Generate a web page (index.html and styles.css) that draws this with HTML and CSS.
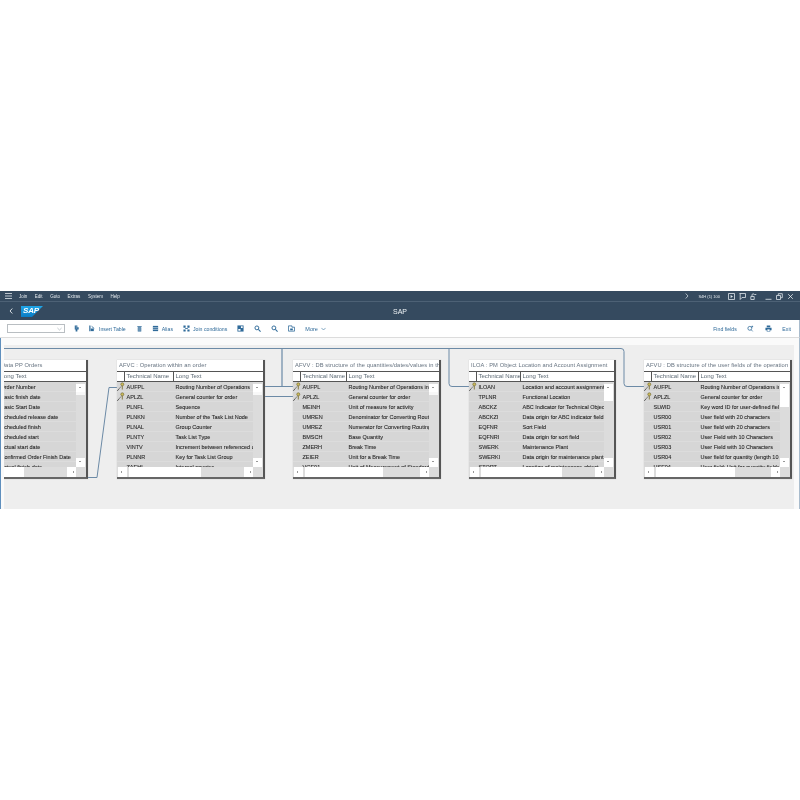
FILE: index.html
```html
<!DOCTYPE html>
<html lang="en">
<head>
<meta charset="utf-8">
<title>SAP</title>
<link rel="stylesheet" href="styles.css">
</head>
<body>
<svg class="defs" width="0" height="0" aria-hidden="true">
  <symbol id="key" viewBox="0 0 9 10">
    <path d="M5 4.600 1 9.200" fill="none" stroke="#3a3a3a" stroke-width=".9" stroke-dasharray="1.100 .5"/>
    <circle cx="6.300" cy="2.300" r="1.500" fill="#cdbb5a" stroke="#6b6330" stroke-width=".6"/>
    <path d="M6.300 3.800v3.700" stroke="#7d7235" stroke-width=".9"/>
  </symbol>
</svg>
<div class="app">
  <div class="menubar">
    <svg class="burger" viewBox="0 0 7 6"><path d="M0 .5h7M0 3h7M0 5.500h7" stroke="#dfe6ec" stroke-width=".8"/></svg>
    <nav class="menu">
      <span>Join</span><span>Edit</span><span>Goto</span><span>Extras</span><span>System</span><span>Help</span>
    </nav>
    <div class="status">
      <svg class="chev" viewBox="0 0 4 6"><path d="M.7.5 3 3 .7 5.500" fill="none" stroke="#dfe6ec" stroke-width=".7"/></svg>
      <span class="sys">S4H (1) 100</span>
      <svg class="win" viewBox="0 0 7 7"><path d="M.5.5h6v6h-6z" fill="none" stroke="#dfe6ec" stroke-width=".8"/><path d="M2.600 2 5 3.500 2.600 5z" fill="#dfe6ec"/></svg>
      <svg class="win" viewBox="0 0 7 7"><path d="M.5.5h6v4H3L1.200 6.500V.5" fill="none" stroke="#dfe6ec" stroke-width=".8"/></svg>
      <svg class="win" viewBox="0 0 7 7"><path d="M.8 3.500h3.400v3H.8zM2 3.500V2a1.200 1.200 0 0 1 2.400 0M4.800 1.500h1.500" fill="none" stroke="#dfe6ec" stroke-width=".8"/></svg>
      <svg class="win gap" viewBox="0 0 7 7"><path d="M.5 6.300h6" stroke="#dfe6ec" stroke-width=".8"/></svg>
      <svg class="win" viewBox="0 0 7 7"><path d="M.5 2.500h4v4h-4zM2.300 2.300V.7h4v4H4.800" fill="none" stroke="#dfe6ec" stroke-width=".8"/></svg>
      <svg class="win" viewBox="0 0 7 7"><path d="M1.200 1.200l4.600 4.600M5.800 1.200 1.200 5.800" stroke="#e8edf1" stroke-width=".8"/></svg>
    </div>
  </div>
  <header class="titlebar">
    <svg class="back" viewBox="0 0 4 6"><path d="M3.300.5 1 3l2.300 2.500" fill="none" stroke="#e8edf1" stroke-width=".9"/></svg>
    <svg class="logo" viewBox="0 0 22 11"><defs><linearGradient id="sap" x1="0" y1="0" x2="0" y2="1"><stop offset="0" stop-color="#1fa6e8"/><stop offset="1" stop-color="#0a7cc4"/></linearGradient></defs><path d="M0 0h22L11 11H0z" fill="url(#sap)"/></svg>
    <span class="logotext">SAP</span>
    <h1 class="apptitle">SAP</h1>
  </header>
  <div class="toolbar">
    <div class="combo"><svg viewBox="0 0 6 4"><path d="M.5.8 3 3.200 5.500.8" fill="none" stroke="#9aa3aa" stroke-width=".7"/></svg></div>
    <svg class="tool first" viewBox="0 0 8 8"><path d="M2 .5h3v2h1.500v2.500H5v2.500H3V5H2z" fill="#2f6a99"/><path d="M3 2h2M3 3.500h2" stroke="#fff" stroke-width=".4"/></svg>
    <button class="tbtn wide1"><svg viewBox="0 0 8 8"><path d="M1 .5v6.500" stroke="#2f6a99" stroke-width="1.400"/><path d="M2 4h3.500v3H2z" fill="#2f6a99"/><path d="M3 1.500 6 4" stroke="#2f6a99"/></svg>Insert Table</button>
    <svg class="tool" viewBox="0 0 8 8"><path d="M1.500 1h5v1h-5zM2 2.500h4v5H2z" fill="#2f6a99"/><path d="M3.300 3.300v3.500M4.700 3.300v3.500" stroke="#fff" stroke-width=".5"/></svg>
    <button class="tbtn wide2"><svg viewBox="0 0 8 8"><path d="M1 1h6v6H1z" fill="#2f6a99"/><path d="M1 3h6M1 5h6" stroke="#fff" stroke-width=".6"/></svg>Alias</button>
    <button class="tbtn wide3"><svg viewBox="0 0 8 8"><path d="M.5.500h2.500v2.500H.5zM5 .5h2.500V3H5zM.5 5H3v2.500H.5zM5 5h2.500v2.500H5z" fill="#2f6a99"/><path d="M2.500 4h3" stroke="#2f6a99"/></svg>Join conditions</button>
    <svg class="tool" viewBox="0 0 8 8"><path d="M.5.5h7v7h-7z" fill="#2f6a99"/><path d="M1.500 4.500h2.500v2h-2.500z M4.500 1.500h2v2h-2z" fill="#fff"/></svg>
    <svg class="tool sp" viewBox="0 0 8 8"><circle cx="3.300" cy="3.300" r="2.200" fill="none" stroke="#2f6a99" stroke-width="1.100"/><path d="M5 5l2.500 2.500" stroke="#2f6a99" stroke-width="1.200"/></svg>
    <svg class="tool sp" viewBox="0 0 8 8"><circle cx="3.300" cy="3.300" r="2.200" fill="none" stroke="#2f6a99" stroke-width="1.100"/><path d="M5 5l2.500 2.500" stroke="#2f6a99" stroke-width="1.200"/></svg>
    <svg class="tool sp" viewBox="0 0 8 8"><path d="M.5 1h4v1.500h3V7h-7z" fill="none" stroke="#2f6a99" stroke-width=".9"/><path d="M2.500 4h3v2h-3z" fill="#2f6a99"/></svg>
    <button class="tbtn more">More<svg class="caret" viewBox="0 0 6 4"><path d="M.5.700 3 3.200 5.500.7" fill="none" stroke="#2f6a99" stroke-width=".7"/></svg></button>
    <div class="rtools">
      <button class="tbtn">Find fields</button>
      <svg class="tool" viewBox="0 0 8 8"><circle cx="3.200" cy="3.800" r="2.200" fill="none" stroke="#2f6a99" stroke-width=".9"/><path d="M4.800 5.400 6.500 7.300M6 .8v2M5 1.800h2" stroke="#2f6a99" stroke-width=".8"/></svg>
      <svg class="tool" viewBox="0 0 8 8"><path d="M2 .5h4v2H2zM.5 3h7v3h-1.500v1.500H2V6H.5z" fill="#2f6a99"/><path d="M2.700 5h2.600v2H2.700z" fill="#fff"/></svg>
      <button class="tbtn">Exit</button>
    </div>
  </div>
  <main class="canvas">
    <div class="board">
      <svg class="links" viewBox="0 0 800 171" aria-hidden="true">
        <g fill="none" stroke="#6c8aa6" stroke-width="1">
          <path d="M88 139.500h9l12-90h8"/>
          <path d="M265 48.500h28"/>
          <path d="M265 58.500h28"/>
          <path d="M4 10.500h617q3 0 3 3v32q0 3 3 3h17"/>
          <path d="M282 11v37" stroke-width="1.600" stroke="#8ba2b8"/>
          <path d="M449 11v34.500q0 3 3 3h17"/>
        </g>
      </svg>

      <section class="card c1">
        <h2 class="cardtitle">AFKO : Order Header Data PP Orders</h2>
        <div class="thead"><span></span><span>Technical Name</span><span>Long Text</span></div>
        <div class="rows">
          <div class="row"><i></i><span>AUFNR</span><span>Order Number</span></div>
          <div class="row"><i></i><span>GLTRP</span><span>Basic finish date</span></div>
          <div class="row"><i></i><span>GSTRP</span><span>Basic Start Date</span></div>
          <div class="row"><i></i><span>FTRMS</span><span>Scheduled release date</span></div>
          <div class="row"><i></i><span>GLTRS</span><span>Scheduled finish</span></div>
          <div class="row"><i></i><span>GSTRS</span><span>Scheduled start</span></div>
          <div class="row"><i></i><span>GSTRI</span><span>Actual start date</span></div>
          <div class="row"><i></i><span>GETRI</span><span>Confirmed Order Finish Date</span></div>
          <div class="row"><i></i><span>GLTRI</span><span>Actual finish date</span></div>
        </div>
        <div class="vbar"><b class="up"></b><b class="thumb"></b><b class="down"></b></div>
        <div class="hbar"><b class="lt"></b><b class="hthumb"></b><b class="rt"></b></div>
      </section>

      <section class="card c2">
        <h2 class="cardtitle">AFVC : Operation within an order</h2>
        <div class="thead"><span></span><span>Technical Name</span><span>Long Text</span></div>
        <div class="rows">
          <div class="row"><i><svg><use href="#key"/></svg></i><span>AUFPL</span><span>Routing Number of Operations</span></div>
          <div class="row"><i><svg><use href="#key"/></svg></i><span>APLZL</span><span>General counter for order</span></div>
          <div class="row"><i></i><span>PLNFL</span><span>Sequence</span></div>
          <div class="row"><i></i><span>PLNKN</span><span>Number of the Task List Node</span></div>
          <div class="row"><i></i><span>PLNAL</span><span>Group Counter</span></div>
          <div class="row"><i></i><span>PLNTY</span><span>Task List Type</span></div>
          <div class="row"><i></i><span>VINTV</span><span>Increment between referenced operations</span></div>
          <div class="row"><i></i><span>PLNNR</span><span>Key for Task List Group</span></div>
          <div class="row"><i></i><span>ZAEHL</span><span>Internal counter</span></div>
        </div>
        <div class="vbar"><b class="up"></b><b class="thumb"></b><b class="down"></b></div>
        <div class="hbar"><b class="lt"></b><b class="hthumb"></b><b class="rt"></b></div>
      </section>

      <section class="card c3">
        <h2 class="cardtitle">AFVV : DB structure of the quantities/dates/values in the operation</h2>
        <div class="thead"><span></span><span>Technical Name</span><span>Long Text</span></div>
        <div class="rows">
          <div class="row"><i><svg><use href="#key"/></svg></i><span>AUFPL</span><span>Routing Number of Operations in orders</span></div>
          <div class="row"><i><svg><use href="#key"/></svg></i><span>APLZL</span><span>General counter for order</span></div>
          <div class="row"><i></i><span>MEINH</span><span>Unit of measure for activity</span></div>
          <div class="row"><i></i><span>UMREN</span><span>Denominator for Converting Routing</span></div>
          <div class="row"><i></i><span>UMREZ</span><span>Numerator for Converting Routing</span></div>
          <div class="row"><i></i><span>BMSCH</span><span>Base Quantity</span></div>
          <div class="row"><i></i><span>ZMERH</span><span>Break Time</span></div>
          <div class="row"><i></i><span>ZEIER</span><span>Unit for a Break Time</span></div>
          <div class="row"><i></i><span>VGE01</span><span>Unit of Measurement of Standard Value</span></div>
        </div>
        <div class="vbar"><b class="up"></b><b class="thumb"></b><b class="down"></b></div>
        <div class="hbar"><b class="lt"></b><b class="hthumb"></b><b class="rt"></b></div>
      </section>

      <section class="card c4">
        <h2 class="cardtitle">ILOA : PM Object Location and Account Assignment</h2>
        <div class="thead"><span></span><span>Technical Name</span><span>Long Text</span></div>
        <div class="rows">
          <div class="row"><i><svg><use href="#key"/></svg></i><span>ILOAN</span><span>Location and account assignment</span></div>
          <div class="row"><i></i><span>TPLNR</span><span>Functional Location</span></div>
          <div class="row"><i></i><span>ABCKZ</span><span>ABC Indicator for Technical Object</span></div>
          <div class="row"><i></i><span>ABCKZI</span><span>Data origin for ABC indicator field</span></div>
          <div class="row"><i></i><span>EQFNR</span><span>Sort Field</span></div>
          <div class="row"><i></i><span>EQFNRI</span><span>Data origin for sort field</span></div>
          <div class="row"><i></i><span>SWERK</span><span>Maintenance Plant</span></div>
          <div class="row"><i></i><span>SWERKI</span><span>Data origin for maintenance plant</span></div>
          <div class="row"><i></i><span>STORT</span><span>Location of maintenance object</span></div>
        </div>
        <div class="vbar"><b class="up"></b><b class="thumb tall"></b><b class="down"></b></div>
        <div class="hbar"><b class="lt"></b><b class="hthumb"></b><b class="rt"></b></div>
      </section>

      <section class="card c5">
        <h2 class="cardtitle">AFVU : DB structure of the user fields of the operation</h2>
        <div class="thead"><span></span><span>Technical Name</span><span>Long Text</span></div>
        <div class="rows">
          <div class="row"><i><svg><use href="#key"/></svg></i><span>AUFPL</span><span>Routing Number of Operations in orders</span></div>
          <div class="row"><i><svg><use href="#key"/></svg></i><span>APLZL</span><span>General counter for order</span></div>
          <div class="row"><i></i><span>SLWID</span><span>Key word ID for user-defined fields</span></div>
          <div class="row"><i></i><span>USR00</span><span>User field with 20 characters</span></div>
          <div class="row"><i></i><span>USR01</span><span>User field with 20 characters</span></div>
          <div class="row"><i></i><span>USR02</span><span>User Field with 10 Characters</span></div>
          <div class="row"><i></i><span>USR03</span><span>User Field with 10 Characters</span></div>
          <div class="row"><i></i><span>USR04</span><span>User field for quantity (length 10.3)</span></div>
          <div class="row"><i></i><span>USE04</span><span>User field: Unit for quantity fields</span></div>
        </div>
        <div class="vbar"><b class="up"></b><b class="thumb taller"></b><b class="down"></b></div>
        <div class="hbar"><b class="lt"></b><b class="hthumb"></b><b class="rt"></b></div>
      </section>
    </div>
  </main>
</div>
</body>
</html>
```

FILE: styles.css
```css
* { box-sizing: border-box; }
html, body { margin: 0; background: #fff; }
body { padding-top: 291px; height: 800px; overflow: hidden; font-family: "Liberation Sans", Arial, sans-serif; }
.defs { position: absolute; }
.app { width: 800px; height: 218px; display: flex; flex-direction: column; filter: blur(.3px); }

.menubar { height: 11px; background: #354a5f; border-bottom: 1px solid #4d6175; display: flex; align-items: center; padding: 0 5px; color: #e4e9ee; font-size: 4.500px; }
.burger { width: 7px; height: 6px; }
.menu { display: flex; gap: 7.600px; margin-left: 7px; }
.status { margin-left: auto; display: flex; align-items: center; gap: 4px; padding-right: 1px; }
.chev { width: 4px; height: 6px; margin-right: 5px; }
.sys { font-size: 4px; margin-right: 4px; }
.win { width: 7px; height: 7px; }
.gap { margin-left: 4px; }

.titlebar { height: 18px; background: #354a5f; display: flex; align-items: center; padding-left: 9px; position: relative; }
.back { width: 4px; height: 6px; }
.logo { width: 22px; height: 11px; margin-left: 8px; }
.logotext { position: absolute; left: 23px; top: 3.500px; color: #fff; font-size: 8px; font-weight: 700; font-style: italic; letter-spacing: -.2px; }
.apptitle { flex: 1; margin: 0 0 0 -43px; text-align: center; font-size: 7px; font-weight: 400; color: #eef2f5; }

.toolbar { height: 18px; background: #fff; border-bottom: 1px solid #dcdcdc; border-right: 1px solid #a9bccd; display: flex; align-items: center; padding-left: 7px; }
.combo { width: 58px; height: 9px; border: 1px solid #b9bec2; display: flex; justify-content: flex-end; align-items: center; padding-right: 2px; }
.combo svg { width: 5px; height: 4px; }
.tool { width: 7px; height: 7px; flex: none; }
.first { margin-left: 8px; }
.tbtn { display: inline-flex; align-items: center; gap: 3px; padding: 0; border: 0; background: none; color: #2f6a99; font: 5.200px "Liberation Sans", Arial, sans-serif; white-space: nowrap; }
.tbtn svg { width: 7px; height: 7px; }
.toolbar > .tbtn.wide1 { margin: 0 10px 0 9px; }
.toolbar > .tbtn.wide2 { margin: 0 10px 0 9px; }
.toolbar > .tbtn.wide3 { margin: 0 10px 0 0; }
.sp { margin-left: 10px; }
.more { margin-left: 10px; font-size: 5.500px; }
.tbtn .caret { width: 5px; height: 4px; }
.rtools { margin-left: auto; display: flex; align-items: center; gap: 10.500px; padding-right: 8px; }

.canvas { flex: 1; background: #fafafa; border-left: 1px solid #5f8fbd; border-right: 1px solid #a9bccd; padding-top: 7px; }
.board { height: 164px; margin-left: 3px; margin-right: 5px; background: #eeeeee; position: relative; overflow: hidden; }
.links { position: absolute; left: -4px; top: -7px; width: 800px; height: 171px; }

.card { position: absolute; top: 15px; width: 148px; height: 119px; background: #d6d6d6; border-right: 2px solid #555; border-bottom: 2px solid #666; display: grid; grid-template-rows: 12px 10px 85px 10px; grid-template-columns: 1fr 10px; font-size: 5.500px; color: #333; box-shadow: 0 0 1px #bbb; }
.c1 { left: -64px; --tech: 51px; --long: 78px; --thumb: 72px; }
.c2 { left: 113px; --tech: 49px; --long: 80px; --thumb: 72px; }
.c3 { left: 289px; --tech: 46px; --long: 82px; --thumb: 78px; }
.c4 { left: 465px; width: 147px; --tech: 44px; --long: 83px; --thumb: 81px; }
.c5 { left: 640px; --tech: 47px; --long: 80px; --thumb: 79px; }

.cardtitle { grid-column: 1 / -1; margin: 0; padding: 0 2px; background: #fff; font-size: 5.730px; font-weight: 400; line-height: 11px; height: 12px; color: #667380; white-space: nowrap; overflow: hidden; letter-spacing: .1px; border-bottom: 1px solid #555; }
.thead { grid-column: 1 / -1; display: grid; grid-template-columns: 8px var(--tech) 1fr; background: #fff; font-size: 6px; line-height: 9px; color: #5d6a75; border-bottom: 1px solid #555; white-space: nowrap; }
.thead span { padding-left: 1.500px; border-right: 1px solid #555; overflow: hidden; }
.thead span:last-child { border-right: 0; }
.rows { overflow: hidden; }
.row { height: 10px; display: grid; grid-template-columns: 8px var(--tech) var(--long); line-height: 10px; border-bottom: 1px solid #dcdcdc; color: #262626; -webkit-text-stroke: .08px #262626; white-space: nowrap; }
.row span { padding-left: 1.500px; overflow: hidden; }
.row i { display: block; height: 10px; }
.row i svg { display: block; width: 9px; height: 10px; margin-left: -1px; }

.vbar { position: relative; background: #dcdcdc; }
.vbar b { position: absolute; left: 0; width: 9px; background: #fff; }
.up { top: 2px; height: 8px; }
.up::after, .down::after { content: ""; position: absolute; left: 3px; border: 1.500px solid transparent; }
.up::after { top: 1.500px; border-bottom-color: #333; }
.down::after { top: 3px; border-top-color: #333; }
.thumb { top: 10px; height: 3px; opacity: .8; }
.thumb.tall { height: 9px; opacity: 1; }
.thumb.taller { height: 15px; opacity: 1; }
.down { top: 76px; height: 9px; }

.hbar { grid-column: 1 / -1; position: relative; background: #dcdcdc; }
.hbar b { position: absolute; top: 0; height: 10px; background: #fff; }
.lt { left: 1px; width: 9px; }
.hthumb { left: 12px; width: var(--thumb); }
.rt { right: 10px; width: 9px; }
.lt::after, .rt::after { content: ""; position: absolute; top: 3.500px; border: 1.500px solid transparent; }
.lt::after { left: 1.500px; border-right-color: #333; }
.rt::after { right: 1.500px; border-left-color: #333; }
```
